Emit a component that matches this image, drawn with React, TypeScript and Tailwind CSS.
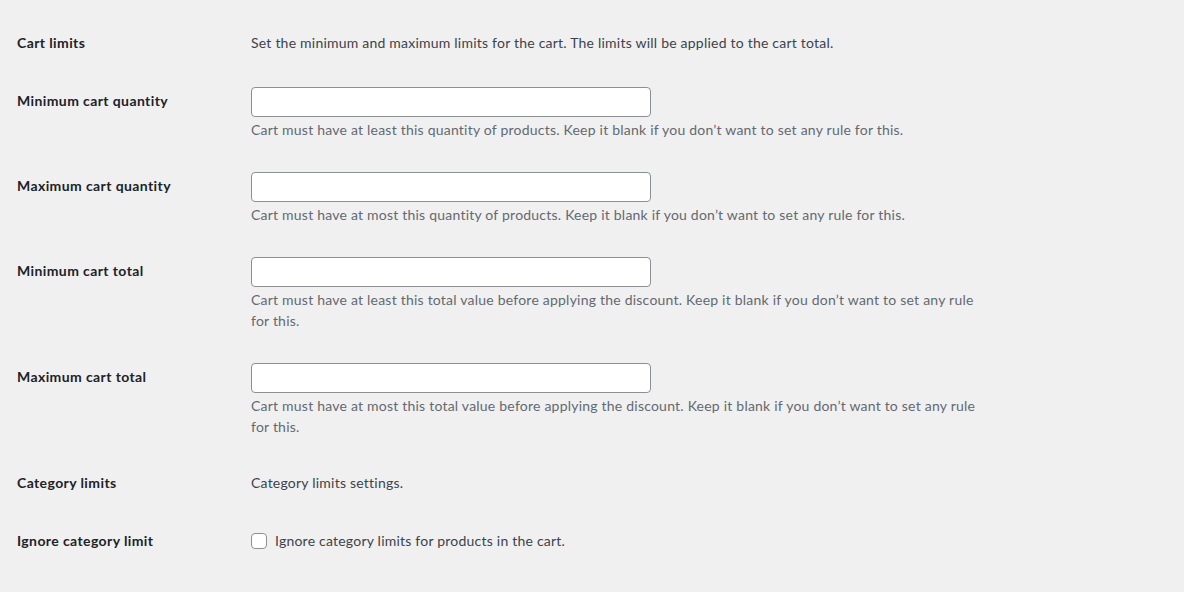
import React from "react";

type Row = {
  label: string;
  kind: "text" | "input" | "checkbox";
  text?: string;
  help?: React.ReactNode;
};

const rows: Row[] = [
  {
    label: "Cart limits",
    kind: "text",
    text: "Set the minimum and maximum limits for the cart. The limits will be applied to the cart total.",
  },
  {
    label: "Minimum cart quantity",
    kind: "input",
    help: "Cart must have at least this quantity of products. Keep it blank if you don’t want to set any rule for this.",
  },
  {
    label: "Maximum cart quantity",
    kind: "input",
    help: "Cart must have at most this quantity of products. Keep it blank if you don’t want to set any rule for this.",
  },
  {
    label: "Minimum cart total",
    kind: "input",
    help: (
      <>
        Cart must have at least this total value before applying the discount. Keep it blank if you don’t want to set any rule
        <br />
        for this.
      </>
    ),
  },
  {
    label: "Maximum cart total",
    kind: "input",
    help: (
      <>
        Cart must have at most this total value before applying the discount. Keep it blank if you don’t want to set any rule
        <br />
        for this.
      </>
    ),
  },
  { label: "Category limits", kind: "text", text: "Category limits settings." },
  {
    label: "Ignore category limit",
    kind: "checkbox",
    text: "Ignore category limits for products in the cart.",
  },
];

export default function App() {
  return (
    <div className="min-h-[592px] w-full bg-[#f0f0f1] pt-[14px] pl-[17px] font-['Lato','Liberation_Sans',sans-serif] text-[14px] tracking-[0.22px] text-[#3c434a]">
      {rows.map((row) => (
        <div key={row.label} className="flex">
          <div className="w-[234px] shrink-0 py-5 pr-2.5 text-[14px] leading-[18px] font-bold tracking-[0.4px] text-[#1d2327]">
            {row.label}
          </div>
          {row.kind === "input" ? (
            <div className="pt-[15px] pb-[17px] pr-2.5">
              <input
                type="text"
                className="block h-[30px] w-[400px] rounded-[4px] border border-[#8c8f94] bg-white px-2 outline-none"
              />
              <p className="mt-0.5 text-[14px] leading-[21px] text-[#646970]">
                {row.help}
              </p>
            </div>
          ) : (
            <div className="py-[15px] pr-2.5">
              {row.kind === "text" && (
                <p className="py-[5px] leading-[18px]">{row.text}</p>
              )}
              {row.kind === "checkbox" && (
                <label className="flex items-center gap-2 py-[5px] leading-[18px]">
                  <span className="block h-4 w-4 rounded-[4px] border border-[#8c8f94] bg-white" />
                  {row.text}
                </label>
              )}
            </div>
          )}
        </div>
      ))}
    </div>
  );
}
